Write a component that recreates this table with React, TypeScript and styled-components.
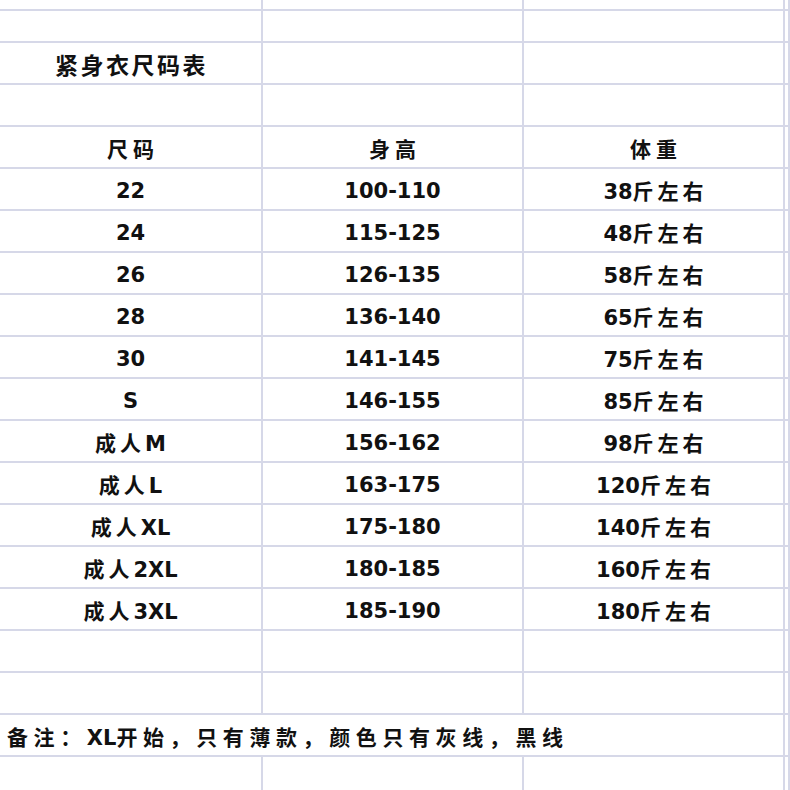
import React from 'react';
import styled, { createGlobalStyle } from 'styled-components';

const GlobalStyle = createGlobalStyle`
  html, body {
    margin: 0;
    padding: 0;
    background: #ffffff;
    overflow: hidden;
  }
  body {
    font-family: "DejaVu Sans", "Noto Sans CJK SC", sans-serif;
    color: #111111;
  }
`;

const LINE = '#d6d8e8';

const Sheet = styled.div`
  width: 790px;
  height: 790px;
  overflow: hidden;
  display: flex;
  flex-direction: column;
`;

const Row = styled.div<{ h: number }>`
  display: grid;
  grid-template-columns: 263px 261px 261px 1fr;
  height: ${p => p.h}px;
  flex: none;
`;

const Cell = styled.div<{ span?: number; align?: 'left' | 'center'; pad?: number }>`
  box-sizing: border-box;
  grid-column: span ${p => p.span ?? 1};
  border-right: 2px solid ${LINE};
  border-bottom: 2px solid ${LINE};
  display: flex;
  align-items: center;
  justify-content: ${p => (p.align === 'left' ? 'flex-start' : 'center')};
  padding-left: ${p => p.pad ?? 0}px;
  padding-top: 4px;
  font-size: 21px;
  line-height: 24px;
  font-weight: 700;
  white-space: nowrap;
`;

const Text = styled.span`
  display: block;
`;

const Latin = styled.span`
  font-family: "DejaVu Sans", sans-serif;
`;

const Han = styled.span<{ gap: number; size?: number; last?: boolean }>`
  font-family: "Noto Sans CJK SC", sans-serif;
  font-size: ${p => p.size ?? 21}px;
  letter-spacing: ${p => p.gap}px;
  margin-right: ${p => (p.last ? -p.gap : 0)}px;
`;

const HAN = /([\u3000-\u303f\u4e00-\u9fff\uff00-\uffef]+)/;

// spreadsheet text: Han runs get letter-spacing, digits/latin stay tight
const Mixed: React.FC<{ text: string; gap?: number; size?: number }> = ({ text, gap = 4, size }) => {
  const parts = text.split(HAN).filter(Boolean);
  return (
    <Text>
      {parts.map((part, i) =>
        HAN.test(part) ? (
          <Han key={i} gap={gap} size={size} last={i === parts.length - 1}>{part}</Han>
        ) : (
          <Latin key={i}>{part}</Latin>
        )
      )}
    </Text>
  );
};

const sizes: [string, string, string][] = [
  ['22', '100-110', '38斤左右'],
  ['24', '115-125', '48斤左右'],
  ['26', '126-135', '58斤左右'],
  ['28', '136-140', '65斤左右'],
  ['30', '141-145', '75斤左右'],
  ['S', '146-155', '85斤左右'],
  ['成人M', '156-162', '98斤左右'],
  ['成人L', '163-175', '120斤左右'],
  ['成人XL', '175-180', '140斤左右'],
  ['成人2XL', '180-185', '160斤左右'],
  ['成人3XL', '185-190', '180斤左右'],
];

const BlankRow: React.FC<{ h: number }> = ({ h }) => (
  <Row h={h}>
    <Cell />
    <Cell />
    <Cell />
    <Cell />
  </Row>
);

const App: React.FC = () => {
  return (
    <>
      <GlobalStyle />
      <Sheet>
        <BlankRow h={11} />
        <BlankRow h={32} />
        <Row h={42}>
          <Cell align="left" pad={55}>
            <Mixed text="紧身衣尺码表" gap={2.5} size={23} />
          </Cell>
          <Cell />
          <Cell />
          <Cell />
        </Row>
        <BlankRow h={42} />
        <Row h={42}>
          <Cell><Mixed text="尺码" gap={5} /></Cell>
          <Cell><Mixed text="身高" gap={5} /></Cell>
          <Cell><Mixed text="体重" gap={5} /></Cell>
          <Cell />
        </Row>
        {sizes.map(([size, height, weight]) => (
          <Row h={42} key={size}>
            <Cell><Mixed text={size} /></Cell>
            <Cell><Mixed text={height} /></Cell>
            <Cell><Mixed text={weight} /></Cell>
            <Cell />
          </Row>
        ))}
        <BlankRow h={42} />
        <BlankRow h={42} />
        <Row h={42}>
          <Cell span={3} align="left" pad={7}>
            <Mixed text="备注：XL开始，只有薄款，颜色只有灰线，黑线" gap={5.6} />
          </Cell>
          <Cell />
        </Row>
        <BlankRow h={42} />
      </Sheet>
    </>
  );
};

export default App;
